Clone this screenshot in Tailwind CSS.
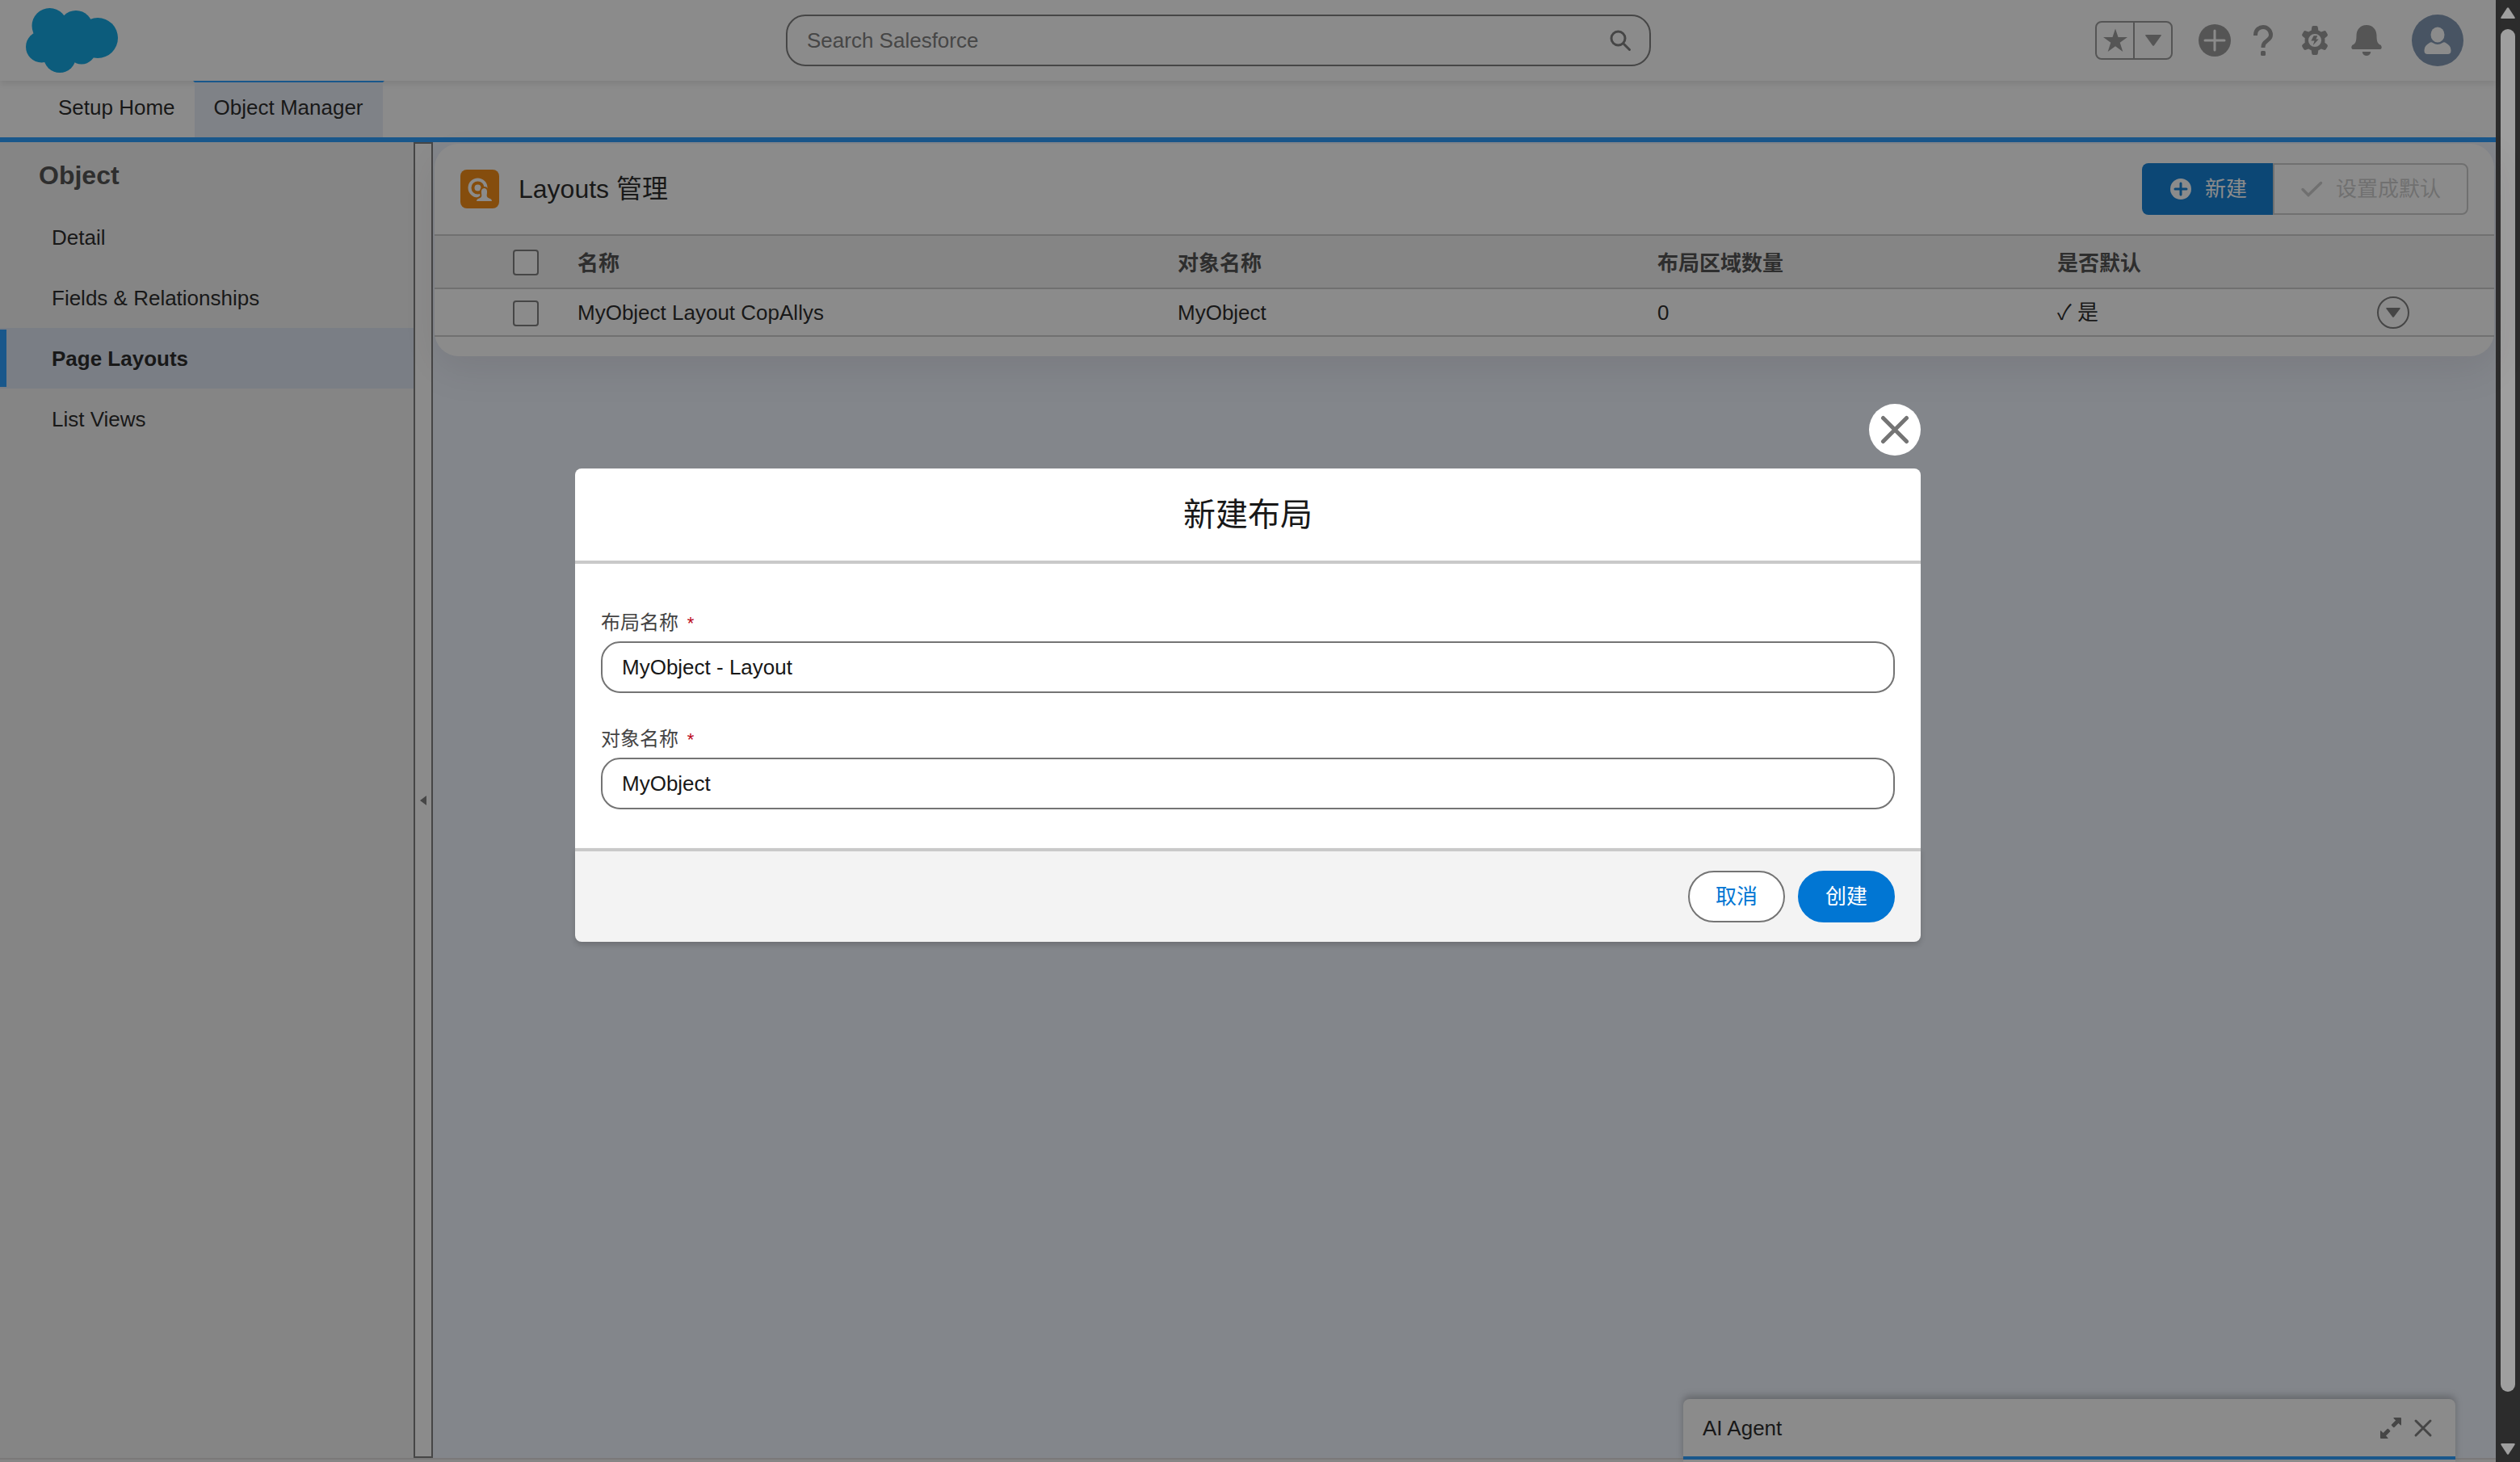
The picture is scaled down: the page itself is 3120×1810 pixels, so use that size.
<!DOCTYPE html>
<html lang="zh-CN">
<head>
  <meta charset="UTF-8">
  <meta name="viewport" content="width=device-width, initial-scale=1.0">
  <title>Object Manager | Page Layouts</title>
  <script src="https://cdn.jsdelivr.net/npm/@tailwindcss/browser@4"></script>
</head>
<body class="flex h-screen overflow-hidden bg-white font-['Liberation_Sans','Noto_Sans_CJK_SC',sans-serif] text-[26px] leading-[38px] text-[#181818]">

  <div class="relative flex min-w-0 flex-1 flex-col">

    <!-- Global header -->
    <header class="z-10 grid h-[100px] shrink-0 grid-cols-[941fr_1071fr_1006fr] items-center bg-white pr-10 pl-8 shadow-[0_4px_8px_rgba(0,0,0,0.1)]">
      <a href="#" aria-label="Salesforce" class="w-fit">
        <svg class="h-20 w-[114px]" viewBox="0 0 114 80" fill="#00a1e0">
          <circle cx="29.500" cy="22" r="22"/>
          <circle cx="62" cy="24" r="21"/>
          <circle cx="89" cy="37" r="25"/>
          <circle cx="19.500" cy="48" r="19.500"/>
          <circle cx="42" cy="60" r="20"/>
          <circle cx="69" cy="52" r="17.500"/>
          <path d="M20 20h70v35H60L42 65 20 60z"/>
        </svg>
      </a>
      <div class="flex h-16 items-center rounded-[24px] border-2 border-[#747474] bg-white pr-[22px] pl-6">
        <input type="search" aria-label="Search Salesforce" placeholder="Search Salesforce" class="min-w-0 flex-1 bg-transparent placeholder:text-[#747474] outline-none">
        <svg class="size-7" viewBox="0 0 28 28" fill="none" stroke="#747474" stroke-width="3" stroke-linecap="round">
          <circle cx="11.500" cy="11.500" r="8.500"/>
          <path d="M18.500 18.500 25.500 25.500"/>
        </svg>
      </div>
      <div class="flex items-center justify-end text-[#939393]">
        <div class="flex h-12 w-24 rounded-lg border-2 border-[#939393]">
          <button type="button" aria-label="Favorites" class="flex flex-1 items-center justify-center border-r-2 border-[#939393]">
            <svg class="size-8" viewBox="0 0 32 32" fill="currentColor"><path d="M16 1.500 19.500 12H31l-9.300 6.700L25.300 30 16 23.200 6.700 30l3.600-11.300L1 12h11.500z"/></svg>
          </button>
          <button type="button" aria-label="Favorites list" class="flex flex-1 items-center justify-center">
            <svg class="h-[14px] w-5" viewBox="0 0 20 14" fill="currentColor"><path d="M1 0h18q1.500 0 .6 1.300L11 13.200q-1 1.200-2 0L.4 1.300Q-.5 0 1 0z"/></svg>
          </button>
        </div>
        <button type="button" aria-label="Quick actions" class="ml-8">
          <svg class="size-10" viewBox="0 0 40 40"><circle cx="20" cy="20" r="20" fill="currentColor"/><path d="M20 8v24M8 20h24" stroke="#fff" stroke-width="3" stroke-linecap="round"/></svg>
        </button>
        <button type="button" aria-label="Help" class="ml-7">
          <svg class="h-[38px] w-6" viewBox="0 0 24 38" fill="none" stroke="currentColor" stroke-width="5"><path d="M2.500 13v-1C2.500 6 7 2.500 12 2.500s9.500 4 9.500 9.500c0 8-9.500 7-9.500 14.500v1.500"/><rect x="9" y="32" width="6" height="6" rx="1.500" fill="currentColor" stroke="none"/></svg>
        </button>
        <button type="button" aria-label="Setup" class="ml-[35px]">
          <svg class="h-[38px] w-[34px]" viewBox="0 0 36 38">
            <path fill="currentColor" fill-rule="evenodd" d="M16 0h4q2 0 2 2l.6 4q2 .8 3.600 2l3.800-1.500q1.800-.6 2.700 1l1.900 3.300q.8 1.600-.6 2.800L31 16.200q.3 2.800 0 5.600l3 2.600q1.400 1.200.6 2.800l-1.900 3.300q-.9 1.600-2.700 1L26.200 30q-1.600 1.200-3.600 2l-.6 4q0 2-2 2h-4q-2 0-2-2l-.6-4q-2-.8-3.600-2L6 31.500q-1.800.6-2.700-1l-1.900-3.300q-.8-1.600.6-2.800l3-2.600q-.3-2.800 0-5.600l-3-2.600Q.6 12.400 1.400 10.800l1.900-3.300q.9-1.600 2.700-1L9.800 8q1.600-1.200 3.600-2l.6-4q0-2 2-2zM18 10.500a8.500 8.500 0 1 0 0 17 8.500 8.500 0 1 0 0-17z"/>
            <path fill="currentColor" d="M16.500 13h5l-2 4.500H23l-7.500 8 2-6H13z"/>
          </svg>
        </button>
        <button type="button" aria-label="Notifications" class="ml-7">
          <svg class="size-[38px]" viewBox="0 0 38 38" fill="currentColor"><path d="M19 0C11 0 6.500 6 6.500 13c0 8-1.500 10-4.500 11.500C-.5 26 0 30 2 30h34c2 0 2.500-4 0-5.500-3-1.500-4.500-3.500-4.500-11.500C31.500 6 27 0 19 0zM14.500 33h9q1 0 .7 1c-.8 2.500-2.700 4-5.200 4s-4.400-1.500-5.200-4q-.3-1 .7-1z"/></svg>
        </button>
        <button type="button" aria-label="View profile" class="ml-[37px]">
          <svg class="size-16" viewBox="0 0 64 64"><circle cx="32" cy="32" r="32" fill="#7890ae"/><ellipse cx="32" cy="25" rx="8.500" ry="9.500" fill="#fff"/><path fill="#fff" d="M22 35q2-1.500 4 0 6 4 12 0 2-1.500 4 0 6.500 3.500 6.500 9v1q0 4-4 4h-25q-4 0-4-4v-1q0-5.500 6.500-9z"/></svg>
        </button>
      </div>
    </header>

    <!-- Setup tabs -->
    <nav class="flex h-[76px] shrink-0 border-b-6 border-[#1b96ff] bg-white pl-12">
      <a href="#" class="border-t-2 border-transparent px-6 pt-3">Setup Home</a>
      <a href="#" aria-current="page" class="z-20 -mx-0.5 border-x-2 border-t-2 border-x-transparent border-t-[#1b96ff] bg-[#e7ecf7] bg-clip-padding px-6 pt-3">Object Manager</a>
    </nav>

    <div class="flex min-h-0 flex-1">
      <!-- Object sidebar -->
      <aside class="w-[512px] shrink-0 bg-[#f3f3f3]">
        <h2 class="px-12 pt-[22px] pb-5 text-[32px] font-bold text-[#444444]">Object</h2>
        <ul>
          <li><a href="#" class="flex h-[75px] items-center pl-16">Detail</a></li>
          <li><a href="#" class="flex h-[75px] items-center pl-16">Fields &amp; Relationships</a></li>
          <li class="bg-[#dde5f3] py-[2px]"><a href="#" aria-current="page" class="flex h-[71px] items-center border-l-8 border-[#1b96ff] pl-14 font-bold">Page Layouts</a></li>
          <li><a href="#" class="flex h-[75px] items-center pl-16">List Views</a></li>
        </ul>
      </aside>

      <button type="button" aria-label="Collapse sidebar" class="flex w-6 shrink-0 items-center border-2 border-[#747474] bg-white pl-[6px]">
        <svg class="h-3 w-2" viewBox="0 0 8 12" fill="#747474"><path d="M8 0v12L0 6z"/></svg>
      </button>

      <main class="min-w-0 flex-1 bg-[#eef4fe] p-[2px]">
        <section class="rounded-[30px] bg-white pb-6 shadow-[0_16px_48px_rgba(60,40,50,0.1)]">
          <div class="flex h-28 items-center px-8">
            <svg class="size-12" viewBox="0 0 48 48">
              <rect width="48" height="48" rx="8" fill="#f38303"/>
              <circle cx="21.500" cy="22.500" r="10" fill="none" stroke="#fff" stroke-width="4"/>
              <circle cx="21.500" cy="22.500" r="4" fill="#fff"/>
              <path fill="#fff" stroke="#f38303" stroke-width="2" d="M29.500 22c-3.500 0-5 3-4.500 7 .5 3.500 1 4-2 5.500-3 1-4 2-4 5.500h21c0-3.500-1-4.500-4-5.500-3-1.500-2.500-2-2-5.500.5-4-1-7-4.500-7z"/>
            </svg>
            <h1 class="ml-6 flex-1 text-[32px]">Layouts 管理</h1>
            <div class="flex">
              <button type="button" class="flex h-16 items-center gap-4 rounded-l-lg border-y-2 border-l-2 border-[#0176d3] bg-[#0176d3] px-8 text-white">
                <svg class="size-7" viewBox="0 0 28 28"><circle cx="14" cy="14" r="13" fill="#fff"/><path d="M14 7v14M7 14h14" stroke="#0176d3" stroke-width="3" stroke-linecap="round"/></svg>
                新建
              </button>
              <button type="button" disabled class="flex h-16 items-center gap-4 rounded-r-lg border-2 border-[#c9c9c9] bg-white px-8 text-[#c9c9c9]">
                <svg class="size-7" viewBox="0 0 28 28" fill="none" stroke="currentColor" stroke-width="3.500" stroke-linecap="round"><path d="M3 14.500 10 21.500 25.500 6.500"/></svg>
                设置成默认
              </button>
            </div>
          </div>
          <table class="w-full table-fixed text-left">
            <colgroup>
              <col class="w-[161px]"><col class="w-[743px]"><col class="w-[594px]"><col class="w-[495px]"><col class="w-[342px]"><col>
            </colgroup>
            <thead>
              <tr class="h-[66px] border-y-2 border-[#c9c9c9] bg-[#f3f3f3] text-[#444444]">
                <th class="pt-[2px] pr-8"><input type="checkbox" aria-label="全选" class="ml-auto block size-8 appearance-none rounded border-2 border-[#747474] bg-white"></th>
                <th class="px-4 pt-1 font-bold">名称</th>
                <th class="px-4 pt-1 font-bold">对象名称</th>
                <th class="px-4 pt-1 font-bold">布局区域数量</th>
                <th class="px-4 pt-1 font-bold">是否默认</th>
                <th></th>
              </tr>
            </thead>
            <tbody>
              <tr class="h-[59px] border-b-2 border-[#c9c9c9]">
                <td class="pt-[2px] pr-8"><input type="checkbox" aria-label="选择 MyObject Layout CopAllys" class="ml-auto block size-8 appearance-none rounded border-2 border-[#747474] bg-white"></td>
                <td class="px-4">MyObject Layout CopAllys</td>
                <td class="px-4">MyObject</td>
                <td class="px-4">0</td>
                <td class="px-4">✓ 是</td>
                <td class="px-[70px]">
                  <button type="button" aria-label="更多操作" class="flex size-10 items-center justify-center rounded-full border-2 border-[#747474]">
                    <svg class="h-3 w-[18px]" viewBox="0 0 18 12" fill="#747474"><path d="M1 0h16q1.300 0 .5 1.200L10 11.300q-1 1-2 0L.5 1.200Q-.3 0 1 0z"/></svg>
                  </button>
                </td>
              </tr>
            </tbody>
          </table>
        </section>
      </main>
    </div>

    <!-- Utility bar -->
    <footer class="h-[5px] shrink-0 border-t-2 border-[#dddbda] bg-[#f3f2f2]"></footer>
    <section class="absolute right-[50px] bottom-0 w-[956px] rounded-t-lg bg-white pb-[3px] shadow-[0_-4px_8px_rgba(0,0,0,0.25)]">
      <div class="flex h-[75px] items-center border-b-4 border-[#1b96ff] px-6">
        <h2 class="flex-1">AI Agent</h2>
        <button type="button" aria-label="Pop out" class="mr-[14px]">
          <svg class="size-7" viewBox="0 0 28 28" fill="#747474"><path d="M18 1h8q1 0 1 1v8q0 1-1 .3L23.500 8l-5 5q-.7.700-1.400 0l-2-2q-.7-.7 0-1.400l5-5L17.500 2Q17 1 18 1zM2 27h8q1 0 .3-1L8 23.500l5-5q.7-.7 0-1.400l-2-2q-.7-.7-1.400 0l-5 5L2 17.500Q1 17 1 18v8q0 1 1 1z"/></svg>
        </button>
        <button type="button" aria-label="Close AI Agent" class="mr-1">
          <svg class="size-6" viewBox="0 0 24 24" stroke="#747474" stroke-width="3" stroke-linecap="round"><path d="M3 3l18 18M21 3 3 21"/></svg>
        </button>
      </div>
    </section>

    <!-- Backdrop and dialog -->
    <div class="absolute inset-0 z-30 flex flex-col items-center justify-center bg-[#171717]/50 pb-[144px]">
      <div role="dialog" aria-labelledby="dialog-title" class="w-[54%] max-w-[1666px]">
        <button type="button" aria-label="关闭" class="mb-4 ml-auto flex size-16 items-center justify-center rounded-full bg-white">
          <svg class="size-9" viewBox="0 0 36 36" stroke="#747474" stroke-width="5" stroke-linecap="round"><path d="M3.500 3.500l29 29M32.500 3.500l-29 29"/></svg>
        </button>
        <form>
          <header class="rounded-t-lg border-b-4 border-[#c9c9c9] bg-white px-8 py-7">
            <h2 id="dialog-title" class="text-center text-[40px] leading-[58px]">新建布局</h2>
          </header>
          <div class="bg-white px-8 pt-[54px] pb-12">
            <label for="layout-name" class="block text-[24px] text-[#444444]">布局名称 <abbr title="required" class="ml-1 text-[22px] leading-none text-[#ba0517] no-underline">*</abbr></label>
            <input id="layout-name" type="text" value="MyObject - Layout" class="mt-1 block h-16 w-full rounded-[24px] border-2 border-[#747474] bg-white px-6">
            <label for="object-name" class="mt-[38px] block text-[24px] text-[#444444]">对象名称 <abbr title="required" class="ml-1 text-[22px] leading-none text-[#ba0517] no-underline">*</abbr></label>
            <input id="object-name" type="text" value="MyObject" class="mt-1 block h-16 w-full rounded-[24px] border-2 border-[#747474] bg-white px-6">
          </div>
          <footer class="flex justify-end gap-4 rounded-b-lg border-t-4 border-[#c9c9c9] bg-[#f3f3f3] px-8 py-6 shadow-[0_4px_6px_rgba(0,0,0,0.16)]">
            <button type="button" class="h-16 rounded-full border-2 border-[#747474] bg-white px-8 text-[#0176d3]">取消</button>
            <button type="submit" class="h-16 rounded-full border-2 border-[#0176d3] bg-[#0176d3] px-8 text-white">创建</button>
          </footer>
        </form>
      </div>
    </div>
  </div>

  <!-- Window scrollbar -->
  <div class="flex w-[30px] shrink-0 flex-col items-center bg-[#2c2c2c] py-[9px]">
    <svg class="h-[14px] w-[18px]" viewBox="0 0 18 14" fill="#9f9f9f"><path d="M8 .8q1-1.200 2 0l7.500 11.400Q18.300 14 16.500 14h-15Q-.3 14 .5 12.200z"/></svg>
    <div class="mt-[13px] mb-16 w-[18px] flex-1 rounded-full bg-[#9f9f9f]"></div>
    <svg class="h-[14px] w-[18px]" viewBox="0 0 18 14" fill="#9f9f9f"><path d="M8 13.200q1 1.200 2 0l7.500-11.400Q18.300 0 16.500 0h-15Q-.3 0 .5 1.800z"/></svg>
  </div>

</body>
</html>
